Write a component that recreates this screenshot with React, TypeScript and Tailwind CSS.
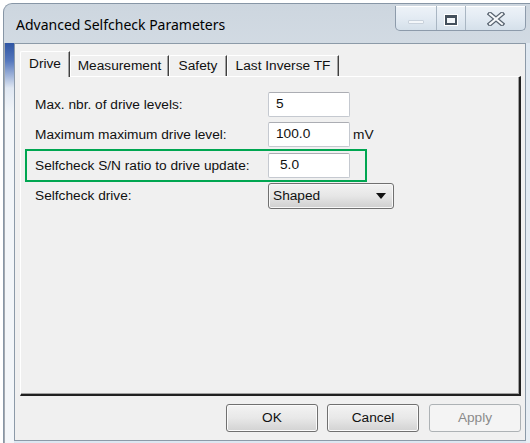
import React from "react";

const UI = { fontFamily: '"Liberation Sans", Arial, sans-serif' };
const TITLE = { fontFamily: '"Noto Sans", "Open Sans", sans-serif' };

function CaptionButtons() {
  return (
    <div className="mt-[2px] mr-[4px] flex h-[25px] overflow-hidden rounded-b-[5px] border border-t-0 border-[#8d9bab] bg-gradient-to-b from-[#eef3f8] via-[#e3ebf3] to-[#d5e0ea] shadow-[inset_0_1px_0_#ffffff]">
      <div className="flex w-[41px] items-center justify-center border-r border-[#a9b6c3]">
        <div className="mt-[7px] h-[4px] w-[16px] rounded-[1px] border border-[#c9d2dc] bg-[#f4f7fa]" />
      </div>
      <div className="flex w-[29px] items-center justify-center border-r border-[#a9b6c3]">
        <div className="mt-[3px] h-[10px] w-[12px] border-[2px] border-t-[3px] border-[#44505c] bg-[#f3f6f9] shadow-[0_0_0_1px_#ffffff]" />
      </div>
      <div className="flex w-[59px] items-center justify-center">
        <svg width="18" height="14" viewBox="0 0 18 14" className="mt-[2px]">
          <path d="M3 2 L15 12 M15 2 L3 12" stroke="#5b6672" strokeWidth="4.6" strokeLinecap="square" />
          <path d="M3 2 L15 12 M15 2 L3 12" stroke="#f7f9fb" strokeWidth="2" strokeLinecap="square" />
        </svg>
      </div>
    </div>
  );
}

function Tab({ label, width, active }: { label: string; width: string; active?: boolean }) {
  if (active) {
    return (
      <div
        className={`${width} relative z-10 mb-[-1px] flex h-[26px] items-center justify-center rounded-tl-[2px] border-l border-t border-white bg-[#f0f0f0] pb-[1px] shadow-[inset_-1px_0_0_#a0a0a0] border-r border-r-[#404040]`}
      >
        <span className="text-[13.7px] text-[#111]">{label}</span>
      </div>
    );
  }
  return (
    <div
      className={`${width} flex h-[21px] items-center justify-center rounded-tl-[2px] border-l border-t border-white bg-[#f0f0f0] shadow-[inset_-1px_0_0_#a0a0a0] border-r border-r-[#404040]`}
    >
      <span className="mt-[1px] text-[13.7px] text-[#111]">{label}</span>
    </div>
  );
}

function TextBox({ value, indent }: { value: string; indent?: boolean }) {
  return (
    <div
      className={`flex h-[25px] w-[82px] items-center rounded-[2px] border border-[#c5c9d0] border-t-[#abadb3] bg-white ${indent ? "pl-[11px]" : "pl-[7px]"}`}
    >
      <span className="text-[13.7px] text-[#111]">{value}</span>
    </div>
  );
}

function Row({ label, children }: { label: string; children: React.ReactNode }) {
  return (
    <div className="flex items-center">
      <div className="w-[233px] pt-[1px] text-[13.7px] text-[#111]">{label}</div>
      {children}
    </div>
  );
}

function DialogButton({ label, disabled }: { label: string; disabled?: boolean }) {
  return (
    <div
      className={
        disabled
          ? "flex h-[28px] w-[92px] items-center justify-center rounded-[3px] border border-[#adb2b5] bg-[#f4f4f4] text-[13.7px] text-[#8b8b8b]"
          : "flex h-[28px] w-[92px] items-center justify-center rounded-[3px] border border-[#707070] bg-gradient-to-b from-[#f3f3f3] via-[#e8e8e8] to-[#d2d2d2] text-[13.7px] text-[#111] shadow-[inset_0_0_0_1px_#fbfbfb]"
      }
    >
      {label}
    </div>
  );
}

export default function App() {
  return (
    <div className="h-[443px] w-[530px] overflow-hidden bg-white pl-[3px] pt-[3px]" style={UI}>
      <div className="flex h-[440px] w-[527px] flex-col rounded-tl-[9px] border-l border-t border-[#8796a6] bg-gradient-to-b from-[#cdd6df] via-[#e7eef5] to-[#dde7f1]">
        {/* title bar */}
        <div className="flex h-[39px] items-start justify-between">
          <div className="pl-[12px] pt-[10px] text-[14px] text-black" style={TITLE}>
            Advanced Selfcheck Parameters
          </div>
          <CaptionButtons />
        </div>

        <div className="flex flex-1">
          {/* left frame edge */}
          <div className="w-[10px] border-l border-[#a3a9b0] bg-[linear-gradient(to_bottom,#2f55a3_0px,#5678bd_18px,#dfe7f2_45px,#f3f6f9_70px,#f3f6f9_100%)]" />

          {/* client area */}
          <div className="flex h-[398px] w-[512px] flex-col border border-[#8c9aa8] bg-[#f0f0f0]">
            <div className="pl-[5px] pt-[7px]">
              <div className="flex items-end">
                <Tab label="Drive" width="w-[50px]" active />
                <Tab label="Measurement" width="w-[99px]" />
                <Tab label="Safety" width="w-[58px]" />
                <Tab label="Last Inverse TF" width="w-[112px]" />
              </div>

              <div className="h-[320px] w-[501px] border-l border-t border-white border-r-[2px] border-b-[2px] border-r-[#202020] border-b-[#202020] bg-[#f0f0f0] shadow-[inset_-1px_-1px_0_#a0a0a0]">
                <div className="flex flex-col pl-[14px] pt-[15px]">
                  <Row label="Max. nbr. of drive levels:">
                    <TextBox value="5" />
                  </Row>
                  <div className="mt-[5px]">
                    <Row label="Maximum maximum drive level:">
                      <TextBox value="100.0" />
                      <span className="ml-[3px] pt-[1px] text-[13.7px] text-[#111]">mV</span>
                    </Row>
                  </div>
                  <div className="ml-[-10px] mt-[2px] flex h-[33px] w-[342px] items-center border-2 border-[#00a651] pl-[8px]">
                    <Row label="Selfcheck S/N ratio to drive update:">
                      <TextBox value="5.0" indent />
                    </Row>
                  </div>
                  <div className="mt-[1px]">
                    <Row label="Selfcheck drive:">
                      <div className="flex h-[26px] w-[126px] items-center justify-between rounded-[3px] border border-[#707070] bg-gradient-to-b from-[#f2f2f2] via-[#e6e6e6] to-[#cfcfcf] pl-[4px] pr-[7px] shadow-[inset_0_0_0_1px_#f8f8f8]">
                        <span className="pt-[1px] text-[13.7px] text-[#111]">Shaped</span>
                        <svg width="10" height="6" viewBox="0 0 10 6">
                          <path d="M0 0 H10 L5 6 Z" fill="#111" />
                        </svg>
                      </div>
                    </Row>
                  </div>
                </div>
              </div>
            </div>

            <div className="mt-[8px] flex justify-end pr-[4px]">
              <DialogButton label="OK" />
              <div className="ml-[9px]">
                <DialogButton label="Cancel" />
              </div>
              <div className="ml-[10px]">
                <DialogButton label="Apply" disabled />
              </div>
            </div>
          </div>

          {/* right frame edge */}
          <div className="flex-1 bg-gradient-to-b from-[#dfe8f1] to-[#e8eef4]" />
        </div>
      </div>
    </div>
  );
}
